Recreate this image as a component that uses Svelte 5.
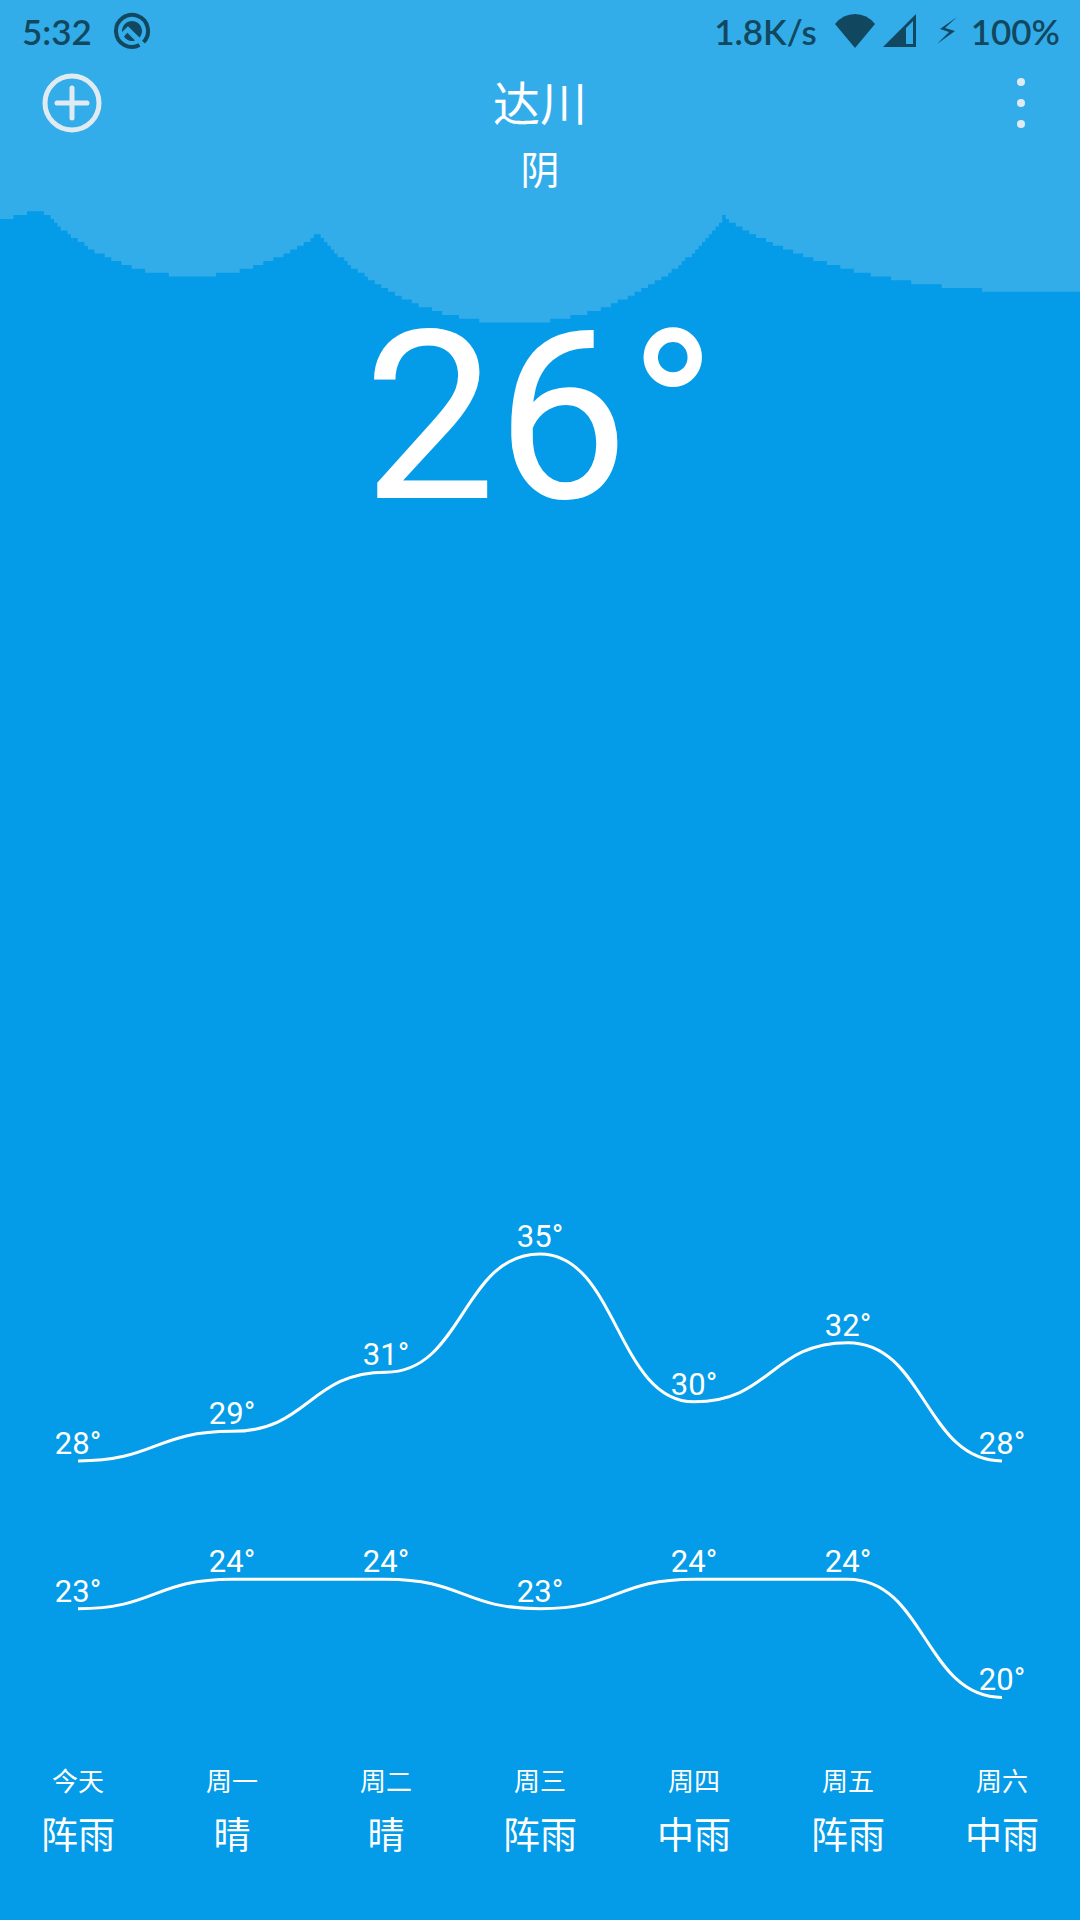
<script>
  const days = [
    { name: '今天', weather: '阵雨', high: 28, low: 23 },
    { name: '周一', weather: '晴', high: 29, low: 24 },
    { name: '周二', weather: '晴', high: 31, low: 24 },
    { name: '周三', weather: '阵雨', high: 35, low: 23 },
    { name: '周四', weather: '中雨', high: 30, low: 24 },
    { name: '周五', weather: '阵雨', high: 32, low: 24 },
    { name: '周六', weather: '中雨', high: 28, low: 20 }
  ];

  // Forecast chart, drawn on a 1078 x 552 canvas
  const colWidth = 154;
  const degree = 29.56;
  const px = (i) => colWidth * (i + 0.5);
  const py = (t) => 50 + (35 - t) * degree;

  function curve(key) {
    return days
      .map((d, i) => {
        const x = px(i);
        const y = py(d[key]);
        if (i === 0) return `M${x} ${y}`;
        const mid = x - colWidth / 2;
        return `C${mid} ${py(days[i - 1][key])} ${mid} ${y} ${x} ${y}`;
      })
      .join('');
  }

  // Cloud silhouette on a coarse 320 x 500 grid, which gives its stepped edge
  const cellW = 3.375;
  const cellH = 3.84;
  const steps = [216, 218, 220, 222, 224, 227, 229, 232, 235, 238, 241, 245, 249, 253, 258, 264, 270, 279, 291];

  function puff(col, cx, cy, r) {
    const dx = (col + 0.5) * cellW - cx;
    return Math.round((cy + Math.sqrt(r * r - dx * dx)) / cellH);
  }

  function cloudRow(col) {
    if (col < 4) return 57;
    if (col < 8) return 56;
    if (col < 13) return 55;
    if (col < 94) return puff(col, 193, 71, 205);
    if (col < 214) return puff(col, 515, 60, 263);
    if (col === 214) return 56;
    return 57 + steps.filter((s) => s <= col).length;
  }

  let cloud = 'M0 0';
  for (let col = 0; col < 320; col++) cloud += `V${cloudRow(col)}H${col + 1}`;
  cloud += 'V0Z';
</script>

<main class="screen">
  <svg class="sky" viewBox="0 0 320 500" preserveAspectRatio="none" aria-hidden="true">
    <path d={cloud} />
  </svg>

  <div class="status">
    <span>5:32</span>
    <svg class="q" width="38" height="38" viewBox="0 0 38 38" aria-hidden="true">
      <path d="M26.5 33.1A16 16 0 1 1 30.5 30.1" fill="none" stroke="currentColor" stroke-width="4" />
      <path d="M9 20A10 10 0 1 1 26.5 25.6L15 14.3Z" fill="currentColor" />
      <path d="M11 24.5L14.3 20.8L22 28.4A10 10 0 0 1 11 24.5Z" fill="currentColor" />
    </svg>
    <span class="rate">1.8K/s</span>
    <svg class="wifi" width="40" height="34" viewBox="0 0 40 34" aria-hidden="true">
      <path d="M0 10Q8 0 20 0T40 10L20 34Z" fill="currentColor" />
    </svg>
    <svg class="cell" width="34" height="34" viewBox="0 0 34 34" aria-hidden="true">
      <path d="M0 33L33 0V33ZM23 14V30H30V7Z" fill="currentColor" fill-rule="evenodd" />
    </svg>
    <svg class="bolt" width="20" height="30" viewBox="0 0 20 30" aria-hidden="true">
      <path d="M20 1L3 13L12 16L0 28L18 15L8 12Z" fill="currentColor" />
    </svg>
    <span>100%</span>
  </div>

  <header class="bar">
    <button type="button" aria-label="添加城市">
      <svg width="60" height="60" viewBox="0 0 60 60" aria-hidden="true">
        <circle cx="30" cy="30" r="27" />
        <path d="M30 15V45M15 30H45" />
      </svg>
    </button>
    <div class="place">
      <h1>达川</h1>
      <p>阴</p>
    </div>
    <button class="more" type="button" aria-label="更多">
      <svg class="dots" width="60" height="60" viewBox="0 0 60 60" aria-hidden="true">
        <circle cx="30" cy="9" r="4" />
        <circle cx="30" cy="30" r="4" />
        <circle cx="30" cy="51" r="4" />
      </svg>
    </button>
  </header>

  <p class="now">26°</p>

  <section class="forecast">
    <svg class="chart" viewBox="0 0 1078 552" role="img" aria-label="气温">
      {#each ['high', 'low'] as key}
        <path d={curve(key)} />
        {#each days as d, i}
          <text x={px(i)} y={py(d[key]) - 7}>{d[key]}°</text>
        {/each}
      {/each}
    </svg>
    <ul>
      {#each days as d}
        <li>
          <span class="day">{d.name}</span>
          <span class="weather">{d.weather}</span>
        </li>
      {/each}
    </ul>
  </section>
</main>

<style>
  :global(body) {
    margin: 0;
    background: #049be8;
  }

  .screen {
    position: relative;
    display: flex;
    flex-direction: column;
    min-height: 100vh;
    background: #049be8;
    color: #fff;
    font-family: Roboto, 'Noto Sans CJK SC', sans-serif;
  }

  .sky {
    position: absolute;
    inset: 0;
    width: 100%;
    height: 100%;
    fill: #33adea;
  }

  .status,
  .bar,
  .now,
  .forecast {
    position: relative;
  }

  .status {
    display: flex;
    align-items: center;
    height: 62px;
    padding: 0 20px 0 22px;
    color: #12485f;
    font: 600 35px/62px Lato, sans-serif;
  }

  .q {
    margin-left: 21px;
  }

  .rate {
    margin-left: auto;
  }

  .wifi {
    margin-left: 18px;
  }

  .cell {
    margin-left: 8px;
  }

  .bolt {
    margin: 0 14px 0 20px;
  }

  .bar {
    display: grid;
    grid-template-columns: 1fr auto 1fr;
    align-items: start;
    padding: 7px 29px 0;
  }

  button {
    display: block;
    justify-self: start;
    margin: 4px 0 0;
    padding: 0 13px;
    border: 0;
    background: none;
    cursor: pointer;
  }

  .more {
    justify-self: end;
    padding: 0;
  }

  button svg {
    display: block;
    fill: none;
    stroke: #dfebf1;
    stroke-width: 5;
    stroke-linecap: round;
  }

  button .dots {
    fill: #dfebf1;
    stroke: none;
  }

  .place {
    text-align: center;
  }

  h1,
  p {
    margin: 0;
    font-weight: 400;
  }

  h1 {
    font-size: 47px;
    line-height: 72px;
  }

  .place p {
    font-size: 39px;
    line-height: 60px;
  }

  .now {
    margin-top: 77px;
    font-size: 236px;
    line-height: 280px;
    text-align: center;
  }

  .forecast {
    margin-top: auto;
    padding: 0 1px 54px;
  }

  .chart {
    display: block;
    width: 100%;
  }

  .chart path {
    fill: none;
    stroke: #fff;
    stroke-width: 3;
  }

  .chart text {
    fill: #fff;
    font-size: 31px;
    text-anchor: middle;
  }

  ul {
    display: grid;
    grid-template-columns: repeat(7, 1fr);
    margin: 0;
    padding: 0;
    list-style: none;
  }

  li {
    display: flex;
    flex-direction: column;
    align-items: center;
  }

  .day {
    font-size: 26px;
    line-height: 52px;
  }

  .weather {
    font-size: 37px;
    line-height: 58px;
  }
</style>
